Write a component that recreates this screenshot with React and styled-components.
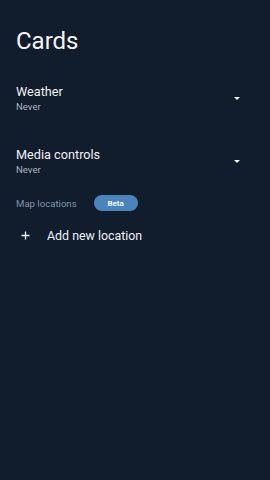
import React from "react";
import styled, { createGlobalStyle } from "styled-components";

const Global = createGlobalStyle`
  html, body { margin: 0; padding: 0; background: #111c2c; }
  body { font-family: Roboto, "Noto Sans", sans-serif; -webkit-font-smoothing: antialiased; }
`;

const Page = styled.div`
  width: 270px;
  height: 480px;
  background: #111c2c;
  color: #e8ecf1;
  box-sizing: border-box;
  padding: 26px 0 0 16px;
`;

const Title = styled.h1`
  margin: 0;
  font-size: 24px;
  font-weight: 400;
  line-height: 30px;
  color: #f3f5f8;
  letter-spacing: 0;
`;

const Row = styled.div`
  display: flex;
  align-items: center;
  justify-content: space-between;
  padding-right: 30px;
  margin-top: ${(p) => p.$mt}px;
`;

const Texts = styled.div`
  display: flex;
  flex-direction: column;
`;

const Label = styled.div`
  font-size: 12.7px;
  line-height: 16px;
  color: #eef1f5;
`;

const Sub = styled.div`
  font-size: 9.6px;
  line-height: 12px;
  color: #aab2bd;
  margin-top: 1px;
`;

const Caret = styled.span`
  width: 0;
  height: 0;
  border-left: 3.5px solid transparent;
  border-right: 3.5px solid transparent;
  border-top: 3.5px solid #f2f4f7;
  margin-top: 0px;
`;

const Section = styled.div`
  display: flex;
  align-items: center;
  gap: 17px;
  margin-top: ${(p) => p.$mt}px;
`;

const SectionLabel = styled.div`
  font-size: 9.6px;
  color: #8195ad;
`;

const Pill = styled.span`
  width: 44px;
  height: 16px;
  border-radius: 8px;
  background: #4a84bd;
  color: #f4f7fb;
  font-size: 8px;
  font-weight: 700;
  display: flex;
  align-items: center;
  justify-content: center;
`;

const AddRow = styled.div`
  display: flex;
  align-items: center;
  margin-top: 17px;
  padding-left: 5px;
  gap: 17px;
`;

const AddText = styled.span`
  font-size: 12.4px;
  color: #eef1f5;
`;

export default function App() {
  return (
    <>
      <Global />
      <Page>
        <Title>Cards</Title>
        <Row $mt={28}>
          <Texts>
            <Label>Weather</Label>
            <Sub>Never</Sub>
          </Texts>
          <Caret />
        </Row>
        <Row $mt={34}>
          <Texts>
            <Label>Media controls</Label>
            <Sub>Never</Sub>
          </Texts>
          <Caret />
        </Row>
        <Section $mt={19}>
          <SectionLabel>Map locations</SectionLabel>
          <Pill>Beta</Pill>
        </Section>
        <AddRow>
          <svg width="9" height="9" viewBox="0 0 9 9">
            <path d="M4.5 0.5v8M0.5 4.5h8" stroke="#eef1f5" strokeWidth="1.3" />
          </svg>
          <AddText>Add new location</AddText>
        </AddRow>
      </Page>
    </>
  );
}
